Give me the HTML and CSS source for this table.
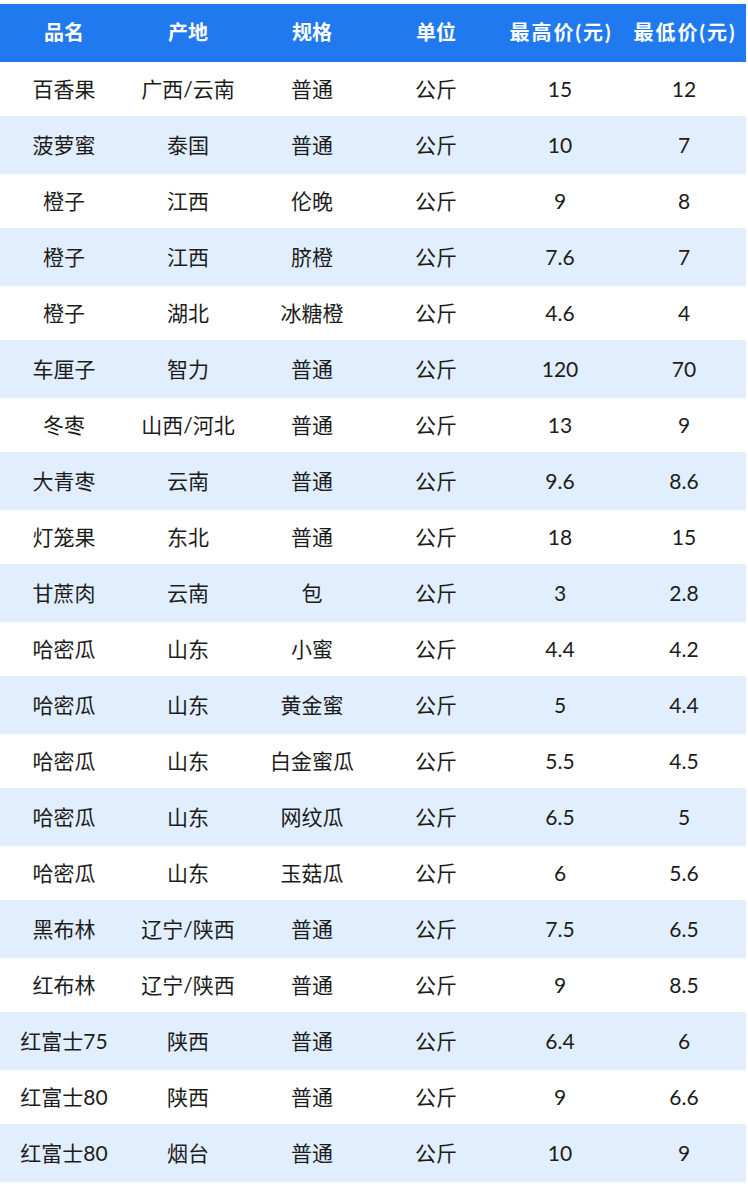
FILE: index.html
```html
<!DOCTYPE html>
<html lang="zh">
<head>
<meta charset="utf-8">
<link rel="stylesheet" href="styles.css">
</head>
<body>
<div class="table">
  <div class="row head"><div>品名</div><div>产地</div><div>规格</div><div>单位</div><div class="price">最高价(元)</div><div class="price">最低价(元)</div></div>
  <div class="row"><div>百香果</div><div>广西/云南</div><div>普通</div><div>公斤</div><div>15</div><div>12</div></div>
  <div class="row alt"><div>菠萝蜜</div><div>泰国</div><div>普通</div><div>公斤</div><div>10</div><div>7</div></div>
  <div class="row"><div>橙子</div><div>江西</div><div>伦晚</div><div>公斤</div><div>9</div><div>8</div></div>
  <div class="row alt"><div>橙子</div><div>江西</div><div>脐橙</div><div>公斤</div><div>7.6</div><div>7</div></div>
  <div class="row"><div>橙子</div><div>湖北</div><div>冰糖橙</div><div>公斤</div><div>4.6</div><div>4</div></div>
  <div class="row alt"><div>车厘子</div><div>智力</div><div>普通</div><div>公斤</div><div>120</div><div>70</div></div>
  <div class="row"><div>冬枣</div><div>山西/河北</div><div>普通</div><div>公斤</div><div>13</div><div>9</div></div>
  <div class="row alt"><div>大青枣</div><div>云南</div><div>普通</div><div>公斤</div><div>9.6</div><div>8.6</div></div>
  <div class="row"><div>灯笼果</div><div>东北</div><div>普通</div><div>公斤</div><div>18</div><div>15</div></div>
  <div class="row alt"><div>甘蔗肉</div><div>云南</div><div>包</div><div>公斤</div><div>3</div><div>2.8</div></div>
  <div class="row"><div>哈密瓜</div><div>山东</div><div>小蜜</div><div>公斤</div><div>4.4</div><div>4.2</div></div>
  <div class="row alt"><div>哈密瓜</div><div>山东</div><div>黄金蜜</div><div>公斤</div><div>5</div><div>4.4</div></div>
  <div class="row"><div>哈密瓜</div><div>山东</div><div>白金蜜瓜</div><div>公斤</div><div>5.5</div><div>4.5</div></div>
  <div class="row alt"><div>哈密瓜</div><div>山东</div><div>网纹瓜</div><div>公斤</div><div>6.5</div><div>5</div></div>
  <div class="row"><div>哈密瓜</div><div>山东</div><div>玉菇瓜</div><div>公斤</div><div>6</div><div>5.6</div></div>
  <div class="row alt"><div>黑布林</div><div>辽宁/陕西</div><div>普通</div><div>公斤</div><div>7.5</div><div>6.5</div></div>
  <div class="row"><div>红布林</div><div>辽宁/陕西</div><div>普通</div><div>公斤</div><div>9</div><div>8.5</div></div>
  <div class="row alt"><div>红富士75</div><div>陕西</div><div>普通</div><div>公斤</div><div>6.4</div><div>6</div></div>
  <div class="row"><div>红富士80</div><div>陕西</div><div>普通</div><div>公斤</div><div>9</div><div>6.6</div></div>
  <div class="row alt"><div>红富士80</div><div>烟台</div><div>普通</div><div>公斤</div><div>10</div><div>9</div></div>
</div>
</body>
</html>
```
FILE: styles.css
```css
html, body {
  margin: 0;
  padding: 0;
  background: #ffffff;
}
body {
  font-family: Lato, "Noto Sans CJK SC", sans-serif;
  color: #1c1c1c;
}
.table {
  margin-top: 4px;
  width: 746px;
}
.row {
  display: grid;
  grid-template-columns: repeat(6, 124px);
  padding-left: 2px;
  height: 54px;
  align-items: center;
  font-size: 21px;
  line-height: 1;
}
.row > div {
  text-align: center;
  white-space: nowrap;
  padding-bottom: 2px;
}
.row.alt {
  height: 58px;
  background: #e1eefd;
}
.row.head {
  height: 58px;
  background: #2079ef;
  color: #ffffff;
  font-weight: bold;
  font-size: 20px;
}
.row.head .price {
  letter-spacing: 2px;
  padding-left: 2px;
}
```
